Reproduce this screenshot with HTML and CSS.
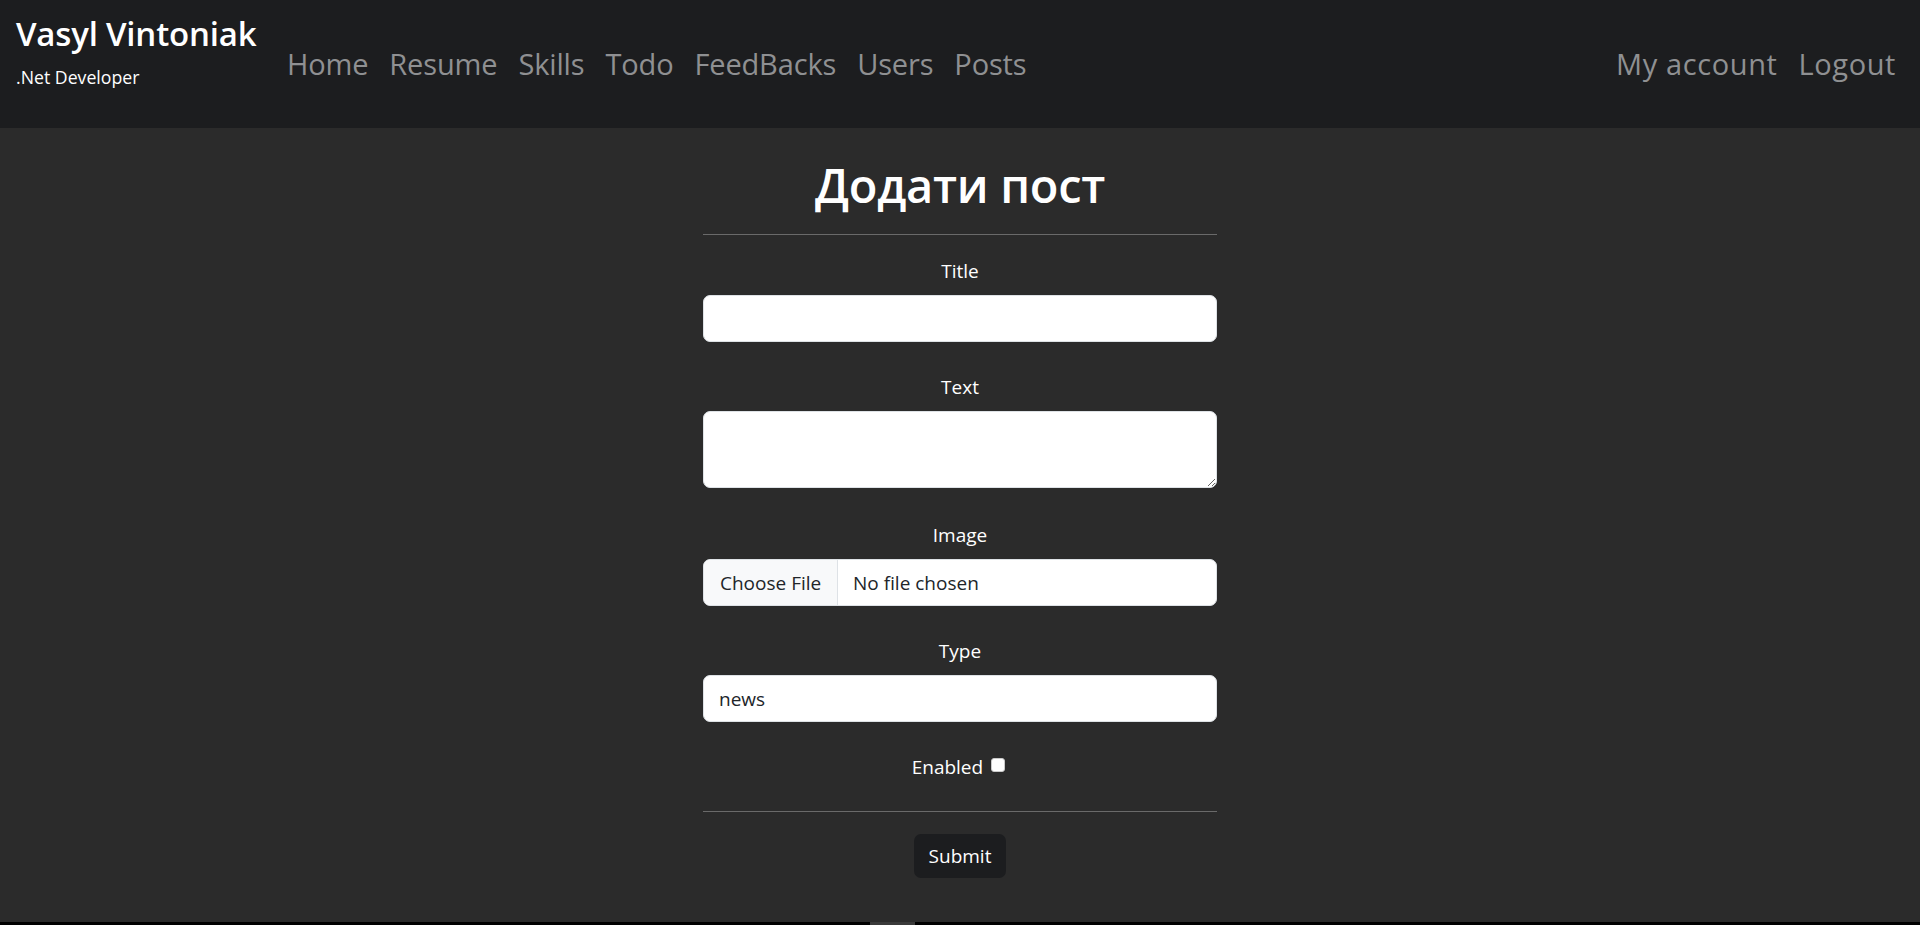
FILE: index.html
```html
<!DOCTYPE html>
<html lang="uk">
<head>
<meta charset="utf-8">
<title>Додати пост</title>
<link rel="stylesheet" href="styles.css">
</head>
<body>
<header class="navbar">
  <div class="brand">
    <div class="brand-name">Vasyl Vintoniak</div>
    <div class="brand-sub">.Net Developer</div>
  </div>
  <nav class="nav nav-main">
    <a class="nav-link" href="#">Home</a>
    <a class="nav-link" href="#">Resume</a>
    <a class="nav-link" href="#">Skills</a>
    <a class="nav-link" href="#">Todo</a>
    <a class="nav-link" href="#">FeedBacks</a>
    <a class="nav-link" href="#">Users</a>
    <a class="nav-link" href="#">Posts</a>
  </nav>
  <nav class="nav nav-right">
    <a class="nav-link" href="#">My account</a>
    <a class="nav-link" href="#">Logout</a>
  </nav>
</header>
<main class="main">
  <form class="post-form">
    <h1 class="title">Додати пост</h1>
    <hr class="divider divider-top">
    <div class="group group-title">
      <label class="label" for="t">Title</label>
      <input class="control" id="t" type="text">
    </div>
    <div class="group group-text">
      <label class="label" for="x">Text</label>
      <textarea class="control control-area" id="x"></textarea>
    </div>
    <div class="group group-image">
      <label class="label">Image</label>
      <div class="control file">
        <span class="file-btn">Choose File</span>
        <span class="file-name">No file chosen</span>
      </div>
    </div>
    <div class="group group-type">
      <label class="label" for="ty">Type</label>
      <input class="control" id="ty" type="text" value="news">
    </div>
    <div class="check-row">
      <label class="label-inline" for="en">Enabled</label> <input class="check" id="en" type="checkbox">
    </div>
    <hr class="divider divider-bottom">
    <button class="btn" type="button">Submit</button>
  </form>
</main>
<div class="bottom-strip"><div class="bottom-thumb"></div></div>
</body>
</html>
```
FILE: styles.css
```css
* { box-sizing: border-box; }
html, body { margin: 0; padding: 0; }
body {
  background: #2b2b2b;
  color: #ffffff;
  font-family: "Open Sans", "Noto Sans", sans-serif;
  min-height: 925px;
}
.navbar {
  height: 128px;
  background: #1c1d1f;
  display: flex;
  align-items: center;
  padding: 0 24px 0 16px;
}
.brand {
  width: 271px;
  align-self: flex-start;
  padding-top: 13px;
}
.brand-name {
  font-size: 33px;
  line-height: 42px;
  font-weight: 600;
  color: #fff;
  letter-spacing: -0.2px;
  white-space: nowrap;
}
.brand-sub {
  margin-top: 9px;
  font-size: 17.7px;
  line-height: 27px;
  color: #fff;
  letter-spacing: 0;
}
.nav { display: flex; gap: 21px; }
.nav-right { margin-left: auto; }
.nav-link {
  font-size: 29px;
  line-height: 43px;
  margin-top: -2px;
  color: #8f9092;
  text-decoration: none;
  letter-spacing: -0.15px;
}
.nav-right .nav-link { letter-spacing: 0.6px; }
.main { display: flex; justify-content: center; padding-top: 27px; }
.post-form { width: 514px; text-align: center; }
.title {
  margin: 0;
  font-size: 47px;
  line-height: 60px;
  font-weight: 600;
  letter-spacing: -0.3px;
}
.divider {
  border: 0;
  border-top: 1px solid #6a6a6a;
  margin: 0;
  height: 0;
}
.divider-top { margin-top: 19px; margin-bottom: 21px; }
.divider-bottom { margin-top: 29px; margin-bottom: 22px; }
.group { margin-bottom: 32px; }
.group-title { margin-bottom: 30px; }
.group-image { margin-bottom: 30px; }
.group-type { margin-bottom: 30px; }
.label, .label-inline {
  font-size: 19px;
  line-height: 30px;
  color: #fff;
}
.label { display: block; margin-bottom: 9px; }
.control {
  display: block;
  width: 100%;
  height: 47px;
  background: #fff;
  border: 1px solid #dee2e6;
  border-radius: 7px;
  padding: 0 15px;
  font-family: "Open Sans", "Noto Sans", sans-serif;
  font-size: 19px;
  color: #212529;
  outline: none;
  text-align: left;
}
.control-area { height: 77px; resize: vertical; padding: 8px 15px; }
.file { display: flex; align-items: center; padding: 0; overflow: hidden; }
.file-btn {
  height: 100%;
  display: flex;
  align-items: center;
  padding: 0 16px 0 16px;
  width: 134px;
  background: #f8f9fa;
  border-right: 1px solid #dee2e6;
  white-space: nowrap;
}
.file-name { padding-left: 15px; white-space: nowrap; }
.check-row { height: 30px; }
.check {
  -webkit-appearance: none;
  appearance: none;
  width: 14px;
  height: 14px;
  margin: 0 3px 0 4px;
  background: #fff;
  border: 1px solid #c9c9c9;
  border-radius: 3px;
  vertical-align: 2px;
}
.btn {
  height: 44px;
  padding: 0 15px;
  background: #1c1d1f;
  color: #fff;
  border: 0;
  border-radius: 7px;
  font-family: "Open Sans", "Noto Sans", sans-serif;
  font-size: 19px;
  cursor: pointer;
}
.bottom-strip {
  position: fixed;
  left: 0; right: 0; bottom: 0;
  height: 3px;
  background: #000;
}
.bottom-thumb {
  position: absolute;
  left: 870px;
  width: 45px;
  top: 0; bottom: 0;
  background: #3a3a3a;
}
```
